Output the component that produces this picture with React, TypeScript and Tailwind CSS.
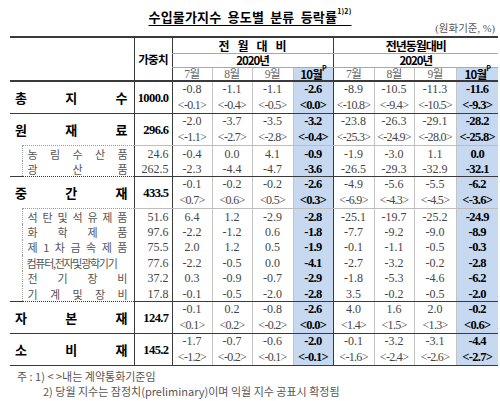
import React from "react";

type Main = { label: string[]; w: string; top: string[]; bot: string[] };
type Sub = { label: string[] | string; w: string; v: string[] };

const HL = "bg-[#c6d9f1]";
const SERIF = "font-['Liberation_Serif','Noto_Sans_CJK_KR',serif]";
const SANS = "font-['Noto_Sans_CJK_KR',sans-serif]";

const colBorder = (i: number) =>
  i === 0 || i === 4 ? "border-l border-l-[#3a3a3a]" : "border-l border-l-[#c4c4c4]";
const isHL = (i: number) => i === 3 || i === 7;

function MainRow({ r, bottom }: { r: Main; bottom: "dark" | "light" }) {
  const bcls = bottom === "dark" ? "border-b border-b-[#3a3a3a]" : "border-b border-b-[#bdbdbd]";
  return (
    <tr>
      <td colSpan={2} className={`${bottom === "dark" ? "border-b border-b-[#3a3a3a]" : ""} p-0`}>
        <div className={`h-[31px] flex items-center justify-between pl-[5px] pr-[6px] ${SANS} font-bold text-[13px] leading-[16px] text-black`}>
          {r.label.map((c, i) => (
            <span key={i}>{c}</span>
          ))}
        </div>
      </td>
      <td className={`border-l border-l-[#3a3a3a] ${bcls} p-0`}>
        <div className={`h-[31px] flex items-center justify-end pr-[3px] ${SERIF} font-bold text-[12.5px] leading-[16px] tracking-[-0.6px] text-black`}>
          {r.w}
        </div>
      </td>
      {r.top.map((t, i) => (
        <td key={i} className={`${colBorder(i)} ${bcls} ${isHL(i) ? HL : ""} p-0`}>
          <div
            className={`h-[31px] flex flex-col items-center justify-center leading-[15.5px] ${SERIF} ${
              isHL(i) ? "font-bold text-black text-[12.5px] tracking-[-0.6px]" : "text-[#444] text-[12px]"
            }`}
          >
            <span>{t}</span>
            <span className="tracking-[-0.7px]">&lt;{r.bot[i]}&gt;</span>
          </div>
        </td>
      ))}
    </tr>
  );
}

function SubRow({ r, first, last, h }: { r: Sub; first: boolean; last: boolean; h: string }) {
  const b = last ? "border-b border-b-[#3a3a3a]" : "";
  return (
    <tr>
      <td className={`${b} p-0`}>
        <div className={h}></div>
      </td>
      <td
        className={`border-l border-dotted border-l-[#9a9a9a] ${first ? "border-t border-t-[#9a9a9a] border-dotted" : ""} ${b} p-0`}
      >
        {Array.isArray(r.label) ? (
          <div className={`${h} flex items-center justify-between pl-[5px] pr-[6px] ${SANS} text-[11px] leading-[14px] text-[#555]`}>
            {r.label.map((c, i) => (
              <span key={i}>{c}</span>
            ))}
          </div>
        ) : (
          <div className={`${h} flex items-center pl-[4px] ${SANS} text-[11px] leading-[14px] tracking-[-1.3px] text-[#555] whitespace-nowrap`}>
            {r.label}
          </div>
        )}
      </td>
      <td className={`border-l border-l-[#3a3a3a] ${b} p-0`}>
        <div className={`${h} flex items-center justify-end pr-[3px] ${SERIF} text-[12px] leading-[14px] text-[#444]`}>{r.w}</div>
      </td>
      {r.v.map((t, i) => (
        <td key={i} className={`${colBorder(i)} ${b} ${isHL(i) ? HL : ""} p-0`}>
          <div
            className={`${h} flex items-center justify-center ${SERIF} leading-[14px] ${
              isHL(i) ? "font-bold text-black text-[12.5px] tracking-[-0.6px]" : "text-[#444] text-[12px]"
            }`}
          >
            {t}
          </div>
        </td>
      ))}
    </tr>
  );
}

const total: Main = {
  label: ["총", "지", "수"],
  w: "1000.0",
  top: ["-0.8", "-1.1", "-1.1", "-2.6", "-8.9", "-10.5", "-11.3", "-11.6"],
  bot: ["-0.1", "-0.4", "-0.5", "0.0", "-10.8", "-9.4", "-10.5", "-9.3"],
};
const raw: Main = {
  label: ["원", "재", "료"],
  w: "296.6",
  top: ["-2.0", "-3.7", "-3.5", "-3.2", "-23.8", "-26.3", "-29.1", "-28.2"],
  bot: ["-1.1", "-2.7", "-2.8", "-0.4", "-25.3", "-24.9", "-28.0", "-25.8"],
};
const rawSubs: Sub[] = [
  { label: ["농", "림", "수", "산", "품"], w: "24.6", v: ["-0.4", "0.0", "4.1", "-0.9", "-1.9", "-3.0", "1.1", "0.0"] },
  { label: ["광", "산", "품"], w: "262.5", v: ["-2.3", "-4.4", "-4.7", "-3.6", "-26.5", "-29.3", "-32.9", "-32.1"] },
];
const mid: Main = {
  label: ["중", "간", "재"],
  w: "433.5",
  top: ["-0.1", "-0.2", "-0.2", "-2.6", "-4.9", "-5.6", "-5.5", "-6.2"],
  bot: ["0.7", "0.6", "0.5", "0.3", "-6.9", "-4.3", "-4.5", "-3.6"],
};
const midSubs: Sub[] = [
  { label: ["석", "탄", "및", "석", "유", "제", "품"], w: "51.6", v: ["6.4", "1.2", "-2.9", "-2.8", "-25.1", "-19.7", "-25.2", "-24.9"] },
  { label: ["화", "학", "제", "품"], w: "97.6", v: ["-2.2", "-1.2", "0.6", "-1.8", "-7.7", "-9.2", "-9.0", "-8.9"] },
  { label: ["제", "1", "차", "금", "속", "제", "품"], w: "75.5", v: ["2.0", "1.2", "0.5", "-1.9", "-0.1", "-1.1", "-0.5", "-0.3"] },
  { label: "컴퓨터,전자및광학기기", w: "77.6", v: ["-2.2", "-0.5", "0.0", "-4.1", "-2.7", "-3.2", "-0.2", "-2.8"] },
  { label: ["전", "기", "장", "비"], w: "37.2", v: ["0.3", "-0.9", "-0.7", "-2.9", "-1.8", "-5.3", "-4.6", "-6.2"] },
  { label: ["기", "계", "및", "장", "비"], w: "17.8", v: ["-0.1", "-0.5", "-2.0", "-2.8", "3.5", "-0.2", "-0.5", "-2.0"] },
];
const cap: Main = {
  label: ["자", "본", "재"],
  w: "124.7",
  top: ["-0.1", "0.2", "-0.8", "-2.6", "4.0", "1.6", "2.0", "-0.2"],
  bot: ["0.1", "0.2", "-0.2", "0.0", "1.4", "1.5", "1.3", "0.6"],
};
const cons: Main = {
  label: ["소", "비", "재"],
  w: "145.2",
  top: ["-1.7", "-0.7", "-0.6", "-2.0", "-0.1", "-3.2", "-3.1", "-4.4"],
  bot: ["-1.2", "-0.2", "-0.1", "-0.1", "-1.6", "-2.4", "-2.6", "-2.7"],
};

const months = ["7월", "8월", "9월"];

export default function App() {
  return (
    <div className="w-[500px] h-[401px] bg-white overflow-hidden">
      <div className="pt-[4px] h-[21px] text-center">
        <span className={`${SANS} font-bold text-[13px] leading-[17px] text-black underline underline-offset-[3px] decoration-[1px] tracking-[0.2px] [word-spacing:3px]`}>
          수입물가지수 용도별 분류 등락률<sup className="text-[7px] align-[5px]">1)2)</sup>
        </span>
      </div>
      <div className={`h-[15px] pr-[5px] text-right ${SERIF} text-[10.5px] leading-[15px] text-[#555]`}>(원화기준, %)</div>
      <table className="ml-[10px] border-collapse table-fixed w-[488px] text-[10px] leading-[10px]">
        <colgroup>
          <col className="w-[12px]" />
          <col className="w-[112px]" />
          <col className="w-[38px]" />
          <col className="w-[40px]" />
          <col className="w-[40px]" />
          <col className="w-[41px]" />
          <col className="w-[40px]" />
          <col className="w-[41px]" />
          <col className="w-[40px]" />
          <col className="w-[42px]" />
          <col className="w-[42px]" />
        </colgroup>
        <thead>
          <tr className="border-t-2 border-t-[#3a3a3a]">
            <td colSpan={2} rowSpan={3} className="p-0 border-b-2 border-b-[#3a3a3a]"></td>
            <td rowSpan={3} className="p-0 border-l border-l-[#3a3a3a] border-b-2 border-b-[#3a3a3a]">
              <div className={`flex items-center justify-center ${SANS} font-bold text-[11.5px] leading-[14px] tracking-[-0.8px] text-black`}>
                가중치
              </div>
            </td>
            <td colSpan={4} className="p-0 border-l border-l-[#3a3a3a] border-b border-b-[#a8a8a8]">
              <div className={`h-[15px] flex items-center justify-center ${SANS} font-bold text-[12px] leading-[14px] text-black`}>
                <span className="tracking-[8px] pl-[8px]">전월대비</span>
              </div>
            </td>
            <td colSpan={4} className="p-0 border-l border-l-[#3a3a3a] border-b border-b-[#a8a8a8]">
              <div className={`h-[15px] flex items-center justify-center ${SANS} font-bold text-[12px] leading-[14px] tracking-[-1px] text-black`}>
                전년동월대비
              </div>
            </td>
          </tr>
          <tr>
            {[0, 1].map((g) => (
              <td key={g} colSpan={4} className="p-0 border-l border-l-[#3a3a3a] border-b border-b-[#a8a8a8]">
                <div className={`h-[13px] flex items-center justify-center ${SANS} font-bold text-[11.5px] leading-[13px] tracking-[-1px] text-black`}>
                  2020년
                </div>
              </td>
            ))}
          </tr>
          <tr>
            {[0, 1].map((g) => (
              <React.Fragment key={g}>
                {months.map((m, i) => (
                  <td key={m} className={`p-0 ${colBorder(g * 4 + i)} border-b-2 border-b-[#3a3a3a]`}>
                    <div className={`h-[12px] flex items-center justify-center ${SERIF} text-[11.5px] leading-[12px] tracking-[-0.5px] text-[#666]`}>
                      {m}
                    </div>
                  </td>
                ))}
                <td className={`p-0 border-l border-l-[#c4c4c4] border-b-2 border-b-[#3a3a3a] ${HL}`}>
                  <div className={`h-[12px] flex items-center justify-center ${SANS} font-bold text-[11.5px] leading-[12px] tracking-[-0.8px] text-black`}>
                    10월<sup className="text-[7px] leading-[7px] -translate-y-[2px]">P</sup>
                  </div>
                </td>
              </React.Fragment>
            ))}
          </tr>
        </thead>
        <tbody>
          <MainRow r={total} bottom="dark" />
          <MainRow r={raw} bottom="light" />
          {rawSubs.map((s, i) => (
            <SubRow key={i} r={s} first={i === 0} last={i === rawSubs.length - 1} h="h-[15px]" />
          ))}
          <MainRow r={mid} bottom="light" />
          {midSubs.map((s, i) => (
            <SubRow key={i} r={s} first={i === 0} last={i === midSubs.length - 1} h="h-[15.4px]" />
          ))}
          <MainRow r={cap} bottom="dark" />
          <MainRow r={cons} bottom="dark" />
        </tbody>
      </table>
      <div className={`pt-[3px] pl-[17px] ${SANS} text-[11px] leading-[15px] text-[#555]`}>
        <div>주 : 1) &lt; &gt;내는 계약통화기준임</div>
        <div className="pl-[26px]">2) 당월 지수는 잠정치(preliminary)이며 익월 지수 공표시 확정됨</div>
      </div>
    </div>
  );
}
